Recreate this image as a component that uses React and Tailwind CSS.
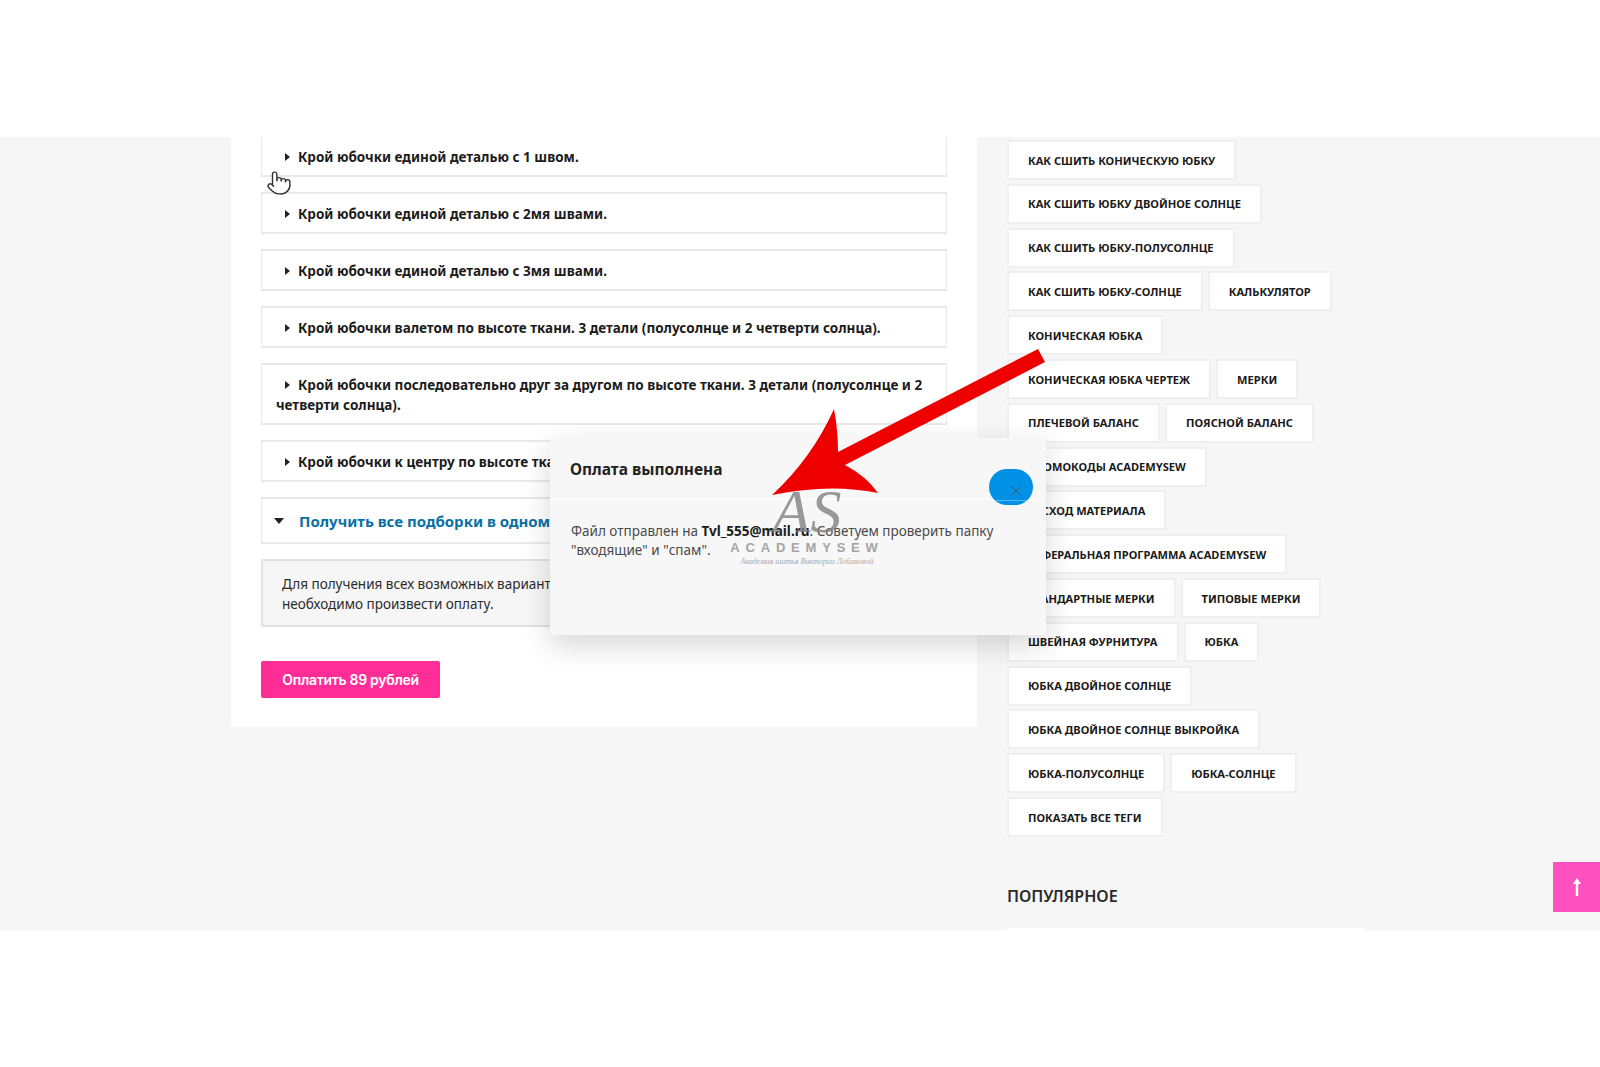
import React from 'react';
import { Pointer, X } from 'lucide-react';

const font = { ubuntu: "font-['Noto_Sans','Open_Sans',sans-serif]" };

const items = [
  { text: 'Крой юбочки единой деталью с 1 швом.', first: true },
  { text: 'Крой юбочки единой деталью с 2мя швами.' },
  { text: 'Крой юбочки единой деталью с 3мя швами.' },
  { text: 'Крой юбочки валетом по высоте ткани. 3 детали (полусолнце и 2 четверти солнца).' },
  { text: 'Крой юбочки последовательно друг за другом по высоте ткани. 3 детали (полусолнце и 2 четверти солнца).' },
  { text: 'Крой юбочки к центру по высоте ткани.' },
];

const tags = [
  'Как сшить коническую юбку',
  'Как сшить юбку двойное солнце',
  'Как сшить юбку-полусолнце',
  'Как сшить юбку-солнце',
  'Калькулятор',
  'Коническая юбка',
  'Коническая юбка чертеж',
  'Мерки',
  'Плечевой баланс',
  'Поясной баланс',
  'Промокоды Academysew',
  'Расход материала',
  'Реферальная программа Academysew',
  'Стандартные мерки',
  'Типовые мерки',
  'Швейная фурнитура',
  'Юбка',
  'Юбка двойное солнце',
  'Юбка двойное солнце выкройка',
  'Юбка-полусолнце',
  'Юбка-солнце',
  'Показать все теги',
];

const AccordionItem = ({ text, first }) => (
  <div className={`mb-[15px] border-x border-b-2 border-[#e9e9e9] px-[14px] pt-[10px] pb-[8px] text-[13.5px] leading-[20px] font-bold text-[#1c1c1c] ${first ? '' : 'border-t-2'}`}>
    <span className="mr-[8px] ml-[9px] inline-block h-0 w-0 border-y-[4px] border-l-[5px] border-y-transparent border-l-[#222] align-[1px]" />
    {text}
  </div>
);

const App = () => {
  return (
    <div className={`relative h-[1067px] w-[1600px] overflow-hidden bg-white ${font.ubuntu}`}>
      <div className="h-[137px]" />

      {/* Main band */}
      <div className="flex h-[793px] items-start overflow-hidden bg-[#f6f6f6] pl-[231px]">
        <div className="w-[746px] bg-white px-[30px] pb-[29px]">
          {items.map((item) => (
            <AccordionItem key={item.text} text={item.text} first={item.first} />
          ))}
          <div className="mb-[15px] flex h-[47px] items-center border-x border-y-2 border-[#e9e9e9] pt-[1px] pl-[12px] text-[15px] font-bold text-[#0a6fa5]">
            <span className="mr-[15px] h-0 w-0 border-x-[5px] border-t-[6px] border-x-transparent border-t-[#222]" />
            Получить все подборки в одном файле
          </div>
          <div className="mb-[34px] h-[68px] rounded-[2px] border-2 border-[#e2e2e2] bg-[#f6f6f6] px-[19px] pt-[13px] text-[13.5px] leading-[20px] text-[#2b2b2b]">
            Для получения всех возможных вариантов кроя юбочки
            <br />
            необходимо произвести оплату.
          </div>
          <button className="flex h-[37px] w-[179px] items-center justify-center rounded-[2px] bg-[#ff2d95] font-['Inter',sans-serif] text-[14px] font-semibold tracking-[-0.3px] text-white">
            Оплатить 89 рублей
          </button>
        </div>

        {/* Sidebar */}
        <div className="ml-[30px] w-[358px] pt-[3px]">
          <div className="flex flex-wrap gap-x-[5px] gap-y-[3.8px]">
            {tags.map((tag) => (
              <a key={tag} className="flex h-[40px] items-center border-2 border-[#efefef] bg-white px-[19px] pt-[2px] text-[11.1px] font-bold whitespace-nowrap text-[#1a1a1a] uppercase">
                {tag}
              </a>
            ))}
          </div>
          <h3 className="mt-[48px] text-[16px] leading-[22px] font-semibold text-[#2a2a2a] uppercase">Популярное</h3>
          <div className="mt-[21px] h-[4px] bg-white" />
        </div>
      </div>

      {/* Hand cursor */}
      <div className="absolute top-[170px] left-[266px] text-[#333]">
        <Pointer size={26} strokeWidth={1.3} fill="#ffffff" />
      </div>

      {/* Payment dialog */}
      <div className="absolute top-[438px] left-[550px] h-[197px] w-[496px] rounded-[2px] bg-[#f7f7f7] shadow-[0_10px_30px_rgba(0,0,0,0.16)]">
        <div className="flex h-[62px] items-center border-b border-white px-[20px] pt-[2px] text-[15.5px] font-bold text-[#222]">
          Оплата выполнена
        </div>
        <p className="px-[21px] pt-[22px] text-[13.5px] leading-[19px] text-[#4a4a4a]">
          Файл отправлен на <strong className="font-bold text-[#1c1c1c]">Tvl_555@mail.ru</strong>. Советуем проверить папку
          <br />
          "входящие" и "спам".
        </p>
        <button className="absolute top-[31px] left-[439px] flex h-[36px] w-[44px] items-end justify-center overflow-hidden rounded-[18px] bg-[#0091e6] pb-[6px] pl-[10px] text-[#35596f]">
          <X size={16} strokeWidth={1.5} />
          <span className="absolute inset-x-0 bottom-[4px] h-px bg-[#58b8f0]" />
        </button>
      </div>

      {/* Watermark */}
      <div className="pointer-events-none absolute top-[478px] left-[732px] flex w-[150px] flex-col items-center">
        <span className="h-[62px] font-['Liberation_Serif',serif] text-[62px] leading-[66px] font-normal text-[#808080]/80 italic">AS</span>
        <span className="font-['Liberation_Sans',sans-serif] text-[13px] leading-[16px] font-bold tracking-[5.8px] whitespace-nowrap text-[#a4a4a4]">ACADEMYSEW</span>
        <span className="font-['Liberation_Serif',serif] text-[8px] leading-[11px] whitespace-nowrap text-[#a8a8a8] italic">Академия шитья Виктории Лобановой</span>
      </div>

      {/* Red arrow */}
      <svg className="pointer-events-none absolute top-[340px] left-[762px]" width="300" height="170" viewBox="0 0 300 170">
        <path
          d="M276 9 L283 22 L83 125 Q104 136 116 153 Q68 143 10 155 Q50 118 72 69 Q76 90 76 112 Z"
          fill="#ee0000"
        />
      </svg>

      {/* Scroll to top */}
      <button className="absolute top-[862px] right-0 flex h-[50px] w-[47px] items-center justify-center bg-[#ff50bf]">
        <svg width="10" height="20" viewBox="0 0 10 20" fill="white">
          <path d="M5 1 L9 7 H6.2 V19 H3.8 V7 H1 Z" />
        </svg>
      </button>
    </div>
  );
};

export default App;
